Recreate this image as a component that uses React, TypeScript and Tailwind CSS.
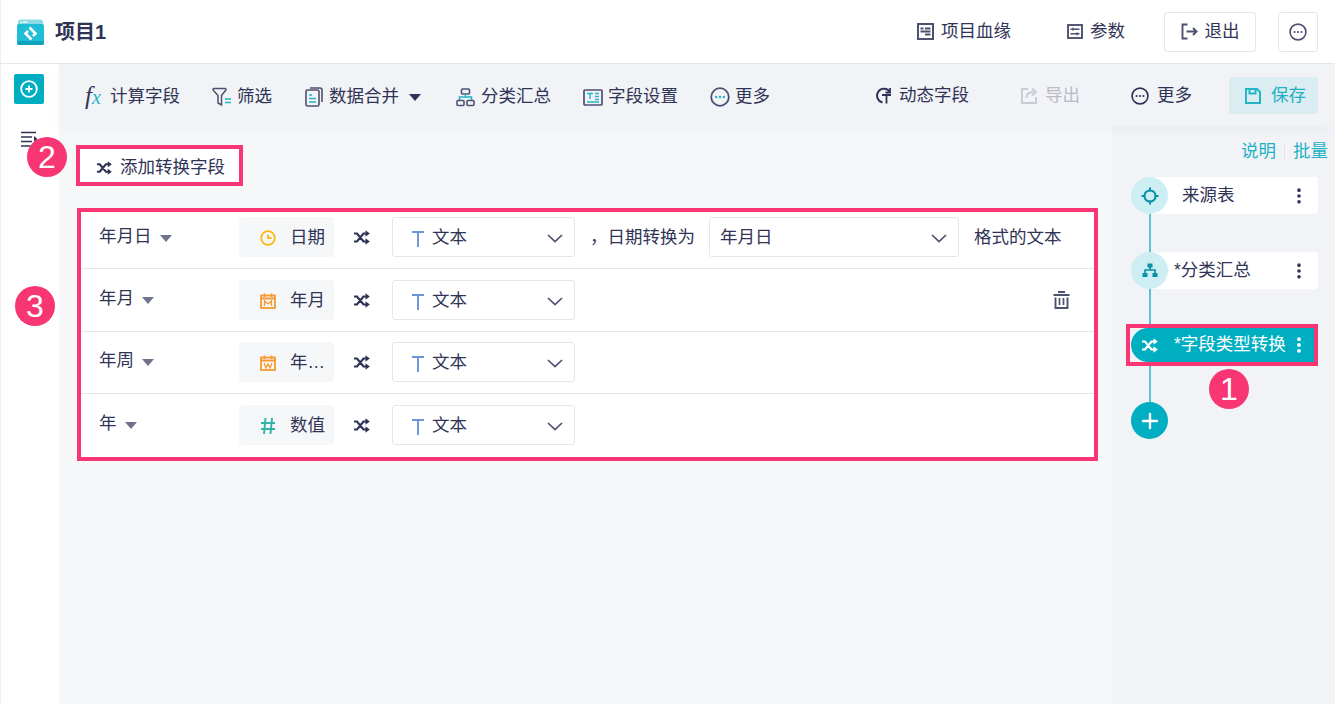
import React from 'react';
import { Plus, EllipsisVertical } from 'lucide-react';

const INK = '#2f3456';
const ICON = '#4d5170';
const TEAL = '#22b5c6';

// 圆圈三点
const DotsCircle = ({ color = ICON, dot = ICON, size = 20 }: { color?: string; dot?: string; size?: number }) => (
  <svg width={size} height={size} viewBox="0 0 20 20" fill="none" className="shrink-0">
    <circle cx="10" cy="10" r="8.8" stroke={color} strokeWidth="1.8" />
    <circle cx="6.2" cy="10" r="1.2" fill={dot} />
    <circle cx="10" cy="10" r="1.2" fill={dot} />
    <circle cx="13.8" cy="10" r="1.2" fill={dot} />
  </svg>
);

// 实心箭头的转换图标
const ShuffleIcon = ({ color = INK, size = 17, className = '' }: { color?: string; size?: number; className?: string }) => (
  <svg width={size} height={size} viewBox="0 0 17 17" fill="none" className={`shrink-0 ${className}`}>
    <path d="M1 4.5h3l6.5 8H13M1 12.5h3l6.5-8H13" stroke={color} strokeWidth="2.2" />
    <path d="M12.5 1.2l4.3 3.3-4.3 3.3zM12.5 9.2l4.3 3.3-4.3 3.3z" fill={color} />
  </svg>
);

const Chevron = ({ className = '' }: { className?: string }) => (
  <svg width="16" height="9" viewBox="0 0 16 9" fill="none" className={`shrink-0 ${className}`}>
    <path d="M1 1l7 6.6L15 1" stroke={ICON} strokeWidth="1.7" />
  </svg>
);

const Logo = () => (
  <svg width="27" height="26" viewBox="0 0 27 26" className="shrink-0">
    <path d="M1 3a2.5 2.5 0 0 1 2.5-2.5h20A2.5 2.5 0 0 1 26 3v4H1z" fill="#8adbe6" />
    <rect x="3" y="2.5" width="1.5" height="1.2" fill="#fff" />
    <rect x="5.5" y="2.5" width="5" height="1.2" fill="#fff" />
    <rect x="0" y="5" width="27" height="21" rx="2" fill="#1fbdd6" />
    <rect x="0" y="22" width="27" height="4" rx="2" fill="#0fa3bd" />
    <path d="M12.5 8.5l6 6-2.6 2.6M14.5 20.5l-6-6 2.6-2.6" stroke="#fff" strokeWidth="2.6" fill="none" />
  </svg>
);

const ToolItem = ({ icon, label, className = '', muted = false }: { icon: React.ReactNode; label: string; className?: string; muted?: boolean }) => (
  <div className={`flex items-center ${className}`}>
    {icon}
    <span className={muted ? 'text-[#b9bcc8]' : ''}>{label}</span>
  </div>
);

const TextSelect = () => (
  <div className="flex h-10 w-[183px] shrink-0 items-center rounded-[3px] border border-[#e4e6ef] bg-white pl-[17px] pr-[11px] pt-[2px]">
    <svg width="16" height="17" viewBox="0 0 16 17" fill="none" className="mr-[6px] shrink-0">
      <path d="M2 2h12M8 2v15" stroke="#6c93d8" strokeWidth="1.9" />
    </svg>
    <span>文本</span>
    <Chevron className="ml-auto" />
  </div>
);

const Row = ({ name, chipIcon, chip, extra, border = true, className = '', nameClass = 'mb-[2px]' }: {
  name: string; chipIcon: React.ReactNode; chip: string; extra?: React.ReactNode; border?: boolean; className?: string; nameClass?: string;
}) => (
  <div className={`pl-[18px] ${border ? 'border-b border-[#e4e6ef]' : ''} ${className}`}>
    <div className="flex h-10 items-center">
      <div className={`flex w-[140px] shrink-0 items-center ${nameClass}`}>
        <span>{name}</span>
        <span className="ml-[8px] mt-[2px] h-0 w-0 border-x-[6px] border-t-[7px] border-x-transparent border-t-[#70738a]" />
      </div>
      <div className="flex h-10 w-[95px] shrink-0 items-center justify-end rounded-[3px] bg-[#f6f7f9] pr-[9px] pt-[2px]">
        {chipIcon}
        <span className="ml-[14px]">{chip}</span>
      </div>
      <ShuffleIcon className="ml-[19px] mr-[22px]" />
      <TextSelect />
      {extra}
    </div>
  </div>
);

const CalendarIcon = ({ letter }: { letter: string }) => (
  <svg width="16" height="16" viewBox="0 0 16 16" fill="none" className="shrink-0">
    <rect x="1" y="2.5" width="14" height="12.5" stroke="#f79a32" strokeWidth="1.8" />
    <path d="M1 5.5h14M4.5 0.5v3.5M11.5 0.5v3.5" stroke="#f79a32" strokeWidth="1.8" />
    {letter === 'M'
      ? <path d="M4.5 13V8l3.5 3 3.5-3v5" stroke="#f79a32" strokeWidth="1.3" />
      : <path d="M4 8l2 5 2-4 2 4 2-5" stroke="#f79a32" strokeWidth="1.3" />}
  </svg>
);

const NodeCard = ({ icon, label, labelClass }: { icon: React.ReactNode; label: string; labelClass: string }) => (
  <div className="flex h-[37px] w-[187px] items-center">
    <div className="z-10 flex h-[37px] w-[37px] shrink-0 items-center justify-center rounded-full bg-[#cdeef2]">{icon}</div>
    <div className="-ml-[18px] flex h-[37px] flex-1 items-center rounded-r-[3px] bg-white pr-[9px]">
      <span className={labelClass}>{label}</span>
      <EllipsisVertical size={20} strokeWidth={2.4} color={INK} className="ml-auto" />
    </div>
  </div>
);

const Connector = ({ className }: { className: string }) => (
  <div className={`ml-[17.5px] w-[2px] bg-[#5cc2d2] ${className}`} />
);

const Badge = ({ n, className }: { n: number; className: string }) => (
  <div className={`absolute z-20 flex h-10 w-10 items-center justify-center rounded-full bg-[#f73673] text-[32px] text-white ${className}`}
    style={{ fontFamily: '"Liberation Sans", sans-serif' }}>
    {n}
  </div>
);

export default function App() {
  return (
    <div
      className="relative flex h-[704px] w-[1335px] flex-col overflow-hidden bg-white text-[17.5px] leading-none"
      style={{ color: INK, fontFamily: '"Liberation Sans", "Noto Sans CJK SC", sans-serif' }}
    >
      {/* 顶部标题栏 */}
      <header className="flex h-[64px] shrink-0 items-center border-b border-[#e4e6ea] pl-[17px] pr-[17px] shadow-[inset_1px_0_0_#eceef2]">
        <Logo />
        <span className="ml-[11px] text-[20px] font-bold">项目1</span>
        <div className="ml-auto flex items-center">
          <ToolItem
            label="项目血缘"
            icon={
              <svg width="17" height="17" viewBox="0 0 17 17" fill="none" className="mr-[7px]">
                <rect x="1" y="1" width="15" height="15" stroke={ICON} strokeWidth="2" />
                <path d="M3.5 5.5h3M3.5 8.5h10M8 5.5h5.5M8 11.5h5.5" stroke={ICON} strokeWidth="2" />
              </svg>
            }
          />
          <ToolItem
            className="ml-[56px]"
            label="参数"
            icon={
              <svg width="16" height="15" viewBox="0 0 16 15" fill="none" className="mr-[7px]">
                <rect x="1" y="1" width="14" height="13" stroke={ICON} strokeWidth="1.9" />
                <path d="M3.5 5.2h9M3.5 9.8h9M6 3.8v2.8M10 8.4v2.8" stroke={ICON} strokeWidth="1.5" />
              </svg>
            }
          />
          <div className="ml-[39px] flex h-10 w-[92px] items-center justify-center rounded-[3px] border border-[#e4e6ef]">
            <svg width="17" height="17" viewBox="0 0 17 17" fill="none" className="mr-[7px]">
              <path d="M6.5 1.5H1.5v14h5M5.5 8.5h10M12 5l3.5 3.5L12 12" stroke={ICON} strokeWidth="1.9" />
            </svg>
            退出
          </div>
          <div className="ml-[22px] flex h-10 w-10 items-center justify-center rounded-[3px] border border-[#e4e6ef]">
            <DotsCircle size={18} />
          </div>
        </div>
      </header>

      <div className="flex min-h-0 flex-1">
        {/* 左侧边栏 */}
        <aside className="flex w-[59px] shrink-0 flex-col pl-[14px] pt-[10px] shadow-[inset_1px_0_0_#eceef2]">
          <div className="flex h-[30px] w-[30px] items-center justify-center rounded-[2px] bg-[#00aec2]">
            <svg width="18" height="18" viewBox="0 0 18 18" fill="none">
              <circle cx="9" cy="9" r="7.8" stroke="#fff" strokeWidth="1.8" />
              <path d="M5.5 9h7M9 5.5v7" stroke="#fff" strokeWidth="1.8" />
            </svg>
          </div>
          <svg width="18" height="17" viewBox="0 0 18 17" fill="none" className="ml-[6px] mt-[27px]">
            <path d="M1 1.5h15M1 6h11M1 10.5h11M1 15h15" stroke={INK} strokeWidth="1.7" />
            <path d="M14 5l3.5 3L14 11z" fill={INK} />
          </svg>
        </aside>

        <div className="flex min-w-0 flex-1 flex-col bg-[#f6f7f9]">
          {/* 工具栏 */}
          <div className="z-10 flex h-[63px] shrink-0 items-center bg-[#f2f3f7] pl-[26px] pr-[17px] shadow-[0_4px_10px_rgba(40,50,90,0.03)]">
            <div className="mt-[3px] flex items-center">
              <ToolItem
                label="计算字段"
                icon={
                  <span className="mb-[4px] mr-[6px] flex w-[19px] items-baseline italic" style={{ fontFamily: '"Liberation Serif", serif' }}>
                    <span className="text-[25px]">f</span>
                    <span className="text-[20px] text-[#22b5c6]">x</span>
                  </span>
                }
              />
              <ToolItem
                className="ml-[32px]"
                label="筛选"
                icon={
                  <svg width="20" height="20" viewBox="0 0 20 20" fill="none" className="mr-[5px]">
                    <path d="M2 1.5h11a1 1 0 0 1 .7 1.7L9.5 8.5V18L6 16V8.5L1.3 3.2A1 1 0 0 1 2 1.5z" stroke={ICON} strokeWidth="1.5" />
                    <path d="M13 12h6M13 15.5h6" stroke={TEAL} strokeWidth="1.6" />
                  </svg>
                }
              />
              <ToolItem
                className="ml-[33px]"
                label="数据合并"
                icon={
                  <svg width="18" height="20" viewBox="0 0 18 20" fill="none" className="mr-[6px]">
                    <rect x="1" y="3" width="13" height="16" rx="1.5" stroke={ICON} strokeWidth="1.6" />
                    <path d="M5 1h10a2 2 0 0 1 2 2v12" stroke={ICON} strokeWidth="1.6" />
                    <path d="M4 8h3M4 11.5h7M4 15h7" stroke={TEAL} strokeWidth="1.4" />
                  </svg>
                }
              />
              <span className="ml-[10px] h-0 w-0 border-x-[6px] border-t-[7px] border-x-transparent border-t-[#2f3456]" />
              <ToolItem
                className="ml-[35px]"
                label="分类汇总"
                icon={
                  <svg width="19" height="19" viewBox="0 0 19 19" fill="none" className="mr-[6px]">
                    <rect x="5.5" y="1" width="8" height="5" rx="1" stroke={ICON} strokeWidth="1.6" />
                    <path d="M3.5 12V9h12v3M9.5 6v3" stroke={TEAL} strokeWidth="1.6" />
                    <rect x="1" y="12.5" width="7" height="5" rx="1" stroke={ICON} strokeWidth="1.6" />
                    <rect x="11" y="12.5" width="7" height="5" rx="1" stroke={ICON} strokeWidth="1.6" />
                  </svg>
                }
              />
              <ToolItem
                className="ml-[32px]"
                label="字段设置"
                icon={
                  <svg width="20" height="17" viewBox="0 0 20 17" fill="none" className="mr-[5px]">
                    <rect x="1" y="1" width="18" height="15" rx="1" stroke={ICON} strokeWidth="1.7" />
                    <path d="M4 4.5h6M7 4.5V10M12 4.5h4M12 7.5h4M12 10.5h4M4 13h12" stroke={TEAL} strokeWidth="1.4" />
                  </svg>
                }
              />
              <ToolItem className="ml-[32px]" label="更多" icon={<span className="mr-[5px]"><DotsCircle dot={TEAL} size={20} /></span>} />
            </div>
            <div className="ml-auto flex items-center">
              <ToolItem
                label="动态字段"
                icon={
                  <svg width="17" height="17" viewBox="0 0 17 17" fill="none" className="mr-[7px]">
                    <path d="M15 5A7 7 0 1 0 7.5 15.5" stroke={INK} strokeWidth="1.9" />
                    <path d="M7 8h9M11.5 8v8.5M15 1v4.5h-4.5" stroke={INK} strokeWidth="1.8" />
                  </svg>
                }
              />
              <ToolItem
                className="ml-[52px]"
                label="导出"
                muted
                icon={
                  <svg width="17" height="17" viewBox="0 0 17 17" fill="none" className="mr-[7px]">
                    <path d="M7 2H1v14h14v-6" stroke="#c9ccd6" strokeWidth="2" />
                    <path d="M5.5 11c0-4 2.5-6 7-6M11 1.5l4 3.5-4 3.5" stroke="#c9ccd6" strokeWidth="2" />
                  </svg>
                }
              />
              <ToolItem className="ml-[51px]" label="更多" icon={<span className="mr-[8px]"><DotsCircle color={INK} dot={INK} size={18} /></span>} />
              <div className="ml-[37px] flex h-[37px] w-[89px] items-center rounded-[3px] bg-[#dcedf2] pl-[16px] text-[#22b0c4]">
                <svg width="16" height="16" viewBox="0 0 16 16" fill="none" className="mr-[10px]">
                  <path d="M1 1h11l3 3v11H1z" stroke={TEAL} strokeWidth="2" />
                  <path d="M4.5 1v4.5h6V1" stroke={TEAL} strokeWidth="2" />
                </svg>
                保存
              </div>
            </div>
          </div>

          <div className="flex min-h-0 flex-1">
            {/* 主内容区 */}
            <main className="w-[1053px] shrink-0 pl-[17px] pt-[18px]">
              <div className="flex h-[41px] w-[167px] items-center border-[4px] border-[#f73673] bg-white pl-[16px] pt-[5px]">
                <ShuffleIcon size={16} className="mr-[8px]" />
                添加转换字段
              </div>
              <div className="ml-[1px] mt-[22px] flex h-[253px] w-[1021px] flex-col border-[4px] border-[#f73673] bg-white">
                <Row
                  className="h-[57px] pt-[5px]"
                  nameClass="mb-0"
                  name="年月日"
                  chip="日期"
                  chipIcon={
                    <svg width="16" height="16" viewBox="0 0 16 16" fill="none" className="shrink-0">
                      <circle cx="8" cy="8" r="6.8" stroke="#fbb815" strokeWidth="1.8" />
                      <path d="M8 4.5V8h3.5" stroke="#fbb815" strokeWidth="1.8" />
                    </svg>
                  }
                  extra={
                    <>
                      <span className="ml-[15px] whitespace-nowrap pt-[2px]">，日期转换为</span>
                      <div className="ml-[14px] flex h-10 w-[250px] shrink-0 items-center rounded-[3px] border border-[#e4e6ef] pl-[10px] pr-[11px] pt-[2px]">
                        年月日
                        <Chevron className="ml-auto" />
                      </div>
                      <span className="ml-[15px] whitespace-nowrap pt-[2px]">格式的文本</span>
                    </>
                  }
                />
                <Row
                  className="h-[63px] pt-[11px]"
                  name="年月"
                  chip="年月"
                  chipIcon={<CalendarIcon letter="M" />}
                  extra={
                    <svg width="17" height="18" viewBox="0 0 17 18" fill="none" className="ml-auto mr-[24px] shrink-0">
                      <path d="M5 1h7M0.5 4h16" stroke={ICON} strokeWidth="1.8" />
                      <path d="M2.5 6.5V17h12V6.5" stroke={ICON} strokeWidth="1.9" />
                      <path d="M6.5 7v7M10.5 7v7" stroke={ICON} strokeWidth="1.7" />
                    </svg>
                  }
                />
                <Row className="h-[62px] pt-[10px]" name="年周" chip="年…" chipIcon={<CalendarIcon letter="W" />} />
                <Row
                  className="flex-1 pt-[11px]"
                  border={false}
                  name="年"
                  chip="数值"
                  chipIcon={
                    <svg width="16" height="18" viewBox="0 0 16 18" fill="none" className="shrink-0">
                      <path d="M5.5 1L4 17M12 1l-1.5 16M1 6h14M1 12h14" stroke="#2fb5a8" strokeWidth="1.9" />
                    </svg>
                  }
                />
              </div>
              <div className="ml-[553px] mt-[54px] h-[45px] w-[130px] bg-[#f5f6f8]" />
            </main>

            {/* 右侧流程 */}
            <aside className="min-w-0 flex-1 bg-[#f2f3f7] pl-[19px]">
              <div className="flex h-[50px] items-center justify-end pr-[7px] text-[#22b0c4]">
                <span>说明</span>
                <span className="mx-[8px] h-[18px] w-px bg-[#e0e3ea]" />
                <span>批量</span>
              </div>
              <NodeCard
                label="来源表"
                labelClass="ml-[32px]"
                icon={
                  <svg width="18" height="18" viewBox="0 0 18 18" fill="none">
                    <circle cx="9" cy="9" r="5.6" stroke="#0d8fa6" strokeWidth="2" />
                    <path d="M9 0.5v4M9 13.5v4M0.5 9h4M13.5 9h4" stroke="#0d8fa6" strokeWidth="2" />
                  </svg>
                }
              />
              <Connector className="h-[38px]" />
              <NodeCard
                label="*分类汇总"
                labelClass="ml-[24px]"
                icon={
                  <svg width="16" height="15" viewBox="0 0 16 15" fill="none">
                    <rect x="5.5" y="0.5" width="5" height="4" fill="#0d8fa6" />
                    <path d="M3 10V7h10v3M8 4v3" stroke="#0d8fa6" strokeWidth="1.6" />
                    <rect x="0.5" y="10" width="5" height="4" fill="#0d8fa6" />
                    <rect x="10.5" y="10" width="5" height="4" fill="#0d8fa6" />
                  </svg>
                }
              />
              <Connector className="h-[35px]" />
              <div className="-ml-[5px] flex h-[42px] w-[192px] border-[4px] border-[#f73673] bg-[#f2f3f7] pl-[1px]">
                <div className="flex flex-1 items-center rounded-l-full bg-[#00aec2] pl-[10px] pr-[5px] text-white">
                  <ShuffleIcon color="#fff" />
                  <span className="ml-[16px] whitespace-nowrap">*字段类型转换</span>
                  <EllipsisVertical size={20} strokeWidth={2.6} color="#fff" className="ml-auto shrink-0" />
                </div>
              </div>
              <Connector className="h-[36px]" />
              <div className="flex h-[37px] w-[37px] items-center justify-center rounded-full bg-[#00aec2]">
                <Plus size={24} strokeWidth={2.4} color="#fff" />
              </div>
            </aside>
          </div>
        </div>
      </div>

      {/* 标注序号 */}
      <Badge n={1} className="left-[1209px] top-[369px]" />
      <Badge n={2} className="left-[27px] top-[137px]" />
      <Badge n={3} className="left-[15px] top-[286px]" />
    </div>
  );
}
